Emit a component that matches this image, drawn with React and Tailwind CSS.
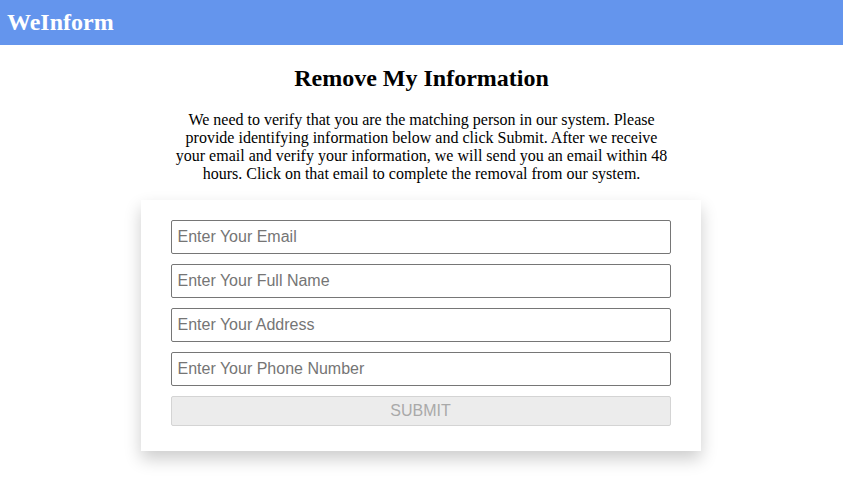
export default function App() {
  return (
    <div className="min-h-screen bg-white font-['Liberation_Serif',serif] text-black">
      {/* Header */}
      <div className="h-[45px] bg-[#6495ed] px-[7px] flex items-center">
        <h1 className="text-[24px] font-bold text-white leading-none -mt-[2px]">WeInform</h1>
      </div>

      <div className="flex flex-col items-center">
        <h2 className="mt-[19px] text-[24px] font-bold leading-[28px]">Remove My Information</h2>
        <p className="mt-[19px] w-[500px] text-center text-[16px] leading-[18px]">
          We need to verify that you are the matching person in our system. Please provide identifying
          information below and click Submit. After we receive your email and verify your information, we
          will send you an email within 48 hours. Click on that email to complete the removal from our system.
        </p>

        <div className="mt-[17px] w-[560px] -translate-x-[1px] bg-white px-[30px] pt-[20px] pb-[25px] shadow-[0_8px_16px_rgba(0,0,0,0.2)] flex flex-col gap-[10px] font-['Liberation_Sans',sans-serif]">
          <input
            className="h-[34px] border border-[#767676] rounded-[2px] px-[6px] text-[16px] placeholder:text-[#757575] outline-none"
            placeholder="Enter Your Email"
          />
          <input
            className="h-[34px] border border-[#767676] rounded-[2px] px-[6px] text-[16px] placeholder:text-[#757575] outline-none"
            placeholder="Enter Your Full Name"
          />
          <input
            className="h-[34px] border border-[#767676] rounded-[2px] px-[6px] text-[16px] placeholder:text-[#757575] outline-none"
            placeholder="Enter Your Address"
          />
          <input
            className="h-[34px] border border-[#767676] rounded-[2px] px-[6px] text-[16px] placeholder:text-[#757575] outline-none"
            placeholder="Enter Your Phone Number"
          />
          <button
            disabled
            className="h-[30px] bg-[#ececec] border border-[#d4d4d4] rounded-[2px] text-[16px] text-[#a9a9a9]"
          >
            SUBMIT
          </button>
        </div>
      </div>
    </div>
  );
}
